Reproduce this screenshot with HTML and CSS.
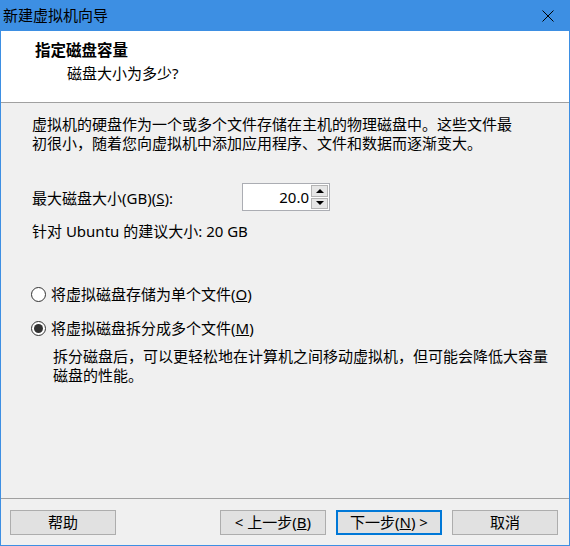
FILE: index.html
```html
<html>
	<head>
		<title>新建虚拟机向导</title>
		<link rel="stylesheet" href="styles.css">
	</head>
	<body>
		<div class="window">
			<div class="titlebar">
				<span class="title">新建虚拟机向导</span>
				<svg class="close" width="12" height="12" viewBox="0 0 12 12">
					<path d="M0.5 0.5 L11.5 11.5 M11.5 0.5 L0.5 11.5" stroke="#000" stroke-width="1" fill="none"/>
				</svg>
			</div>
			<div class="header">
				<div class="h-title">指定磁盘容量</div>
				<div class="h-sub">磁盘大小为多少?</div>
			</div>
			<div class="content">
				<p class="intro">虚拟机的硬盘作为一个或多个文件存储在主机的物理磁盘中。这些文件最初很小，随着您向虚拟机中添加应用程序、文件和数据而逐渐变大。</p>
				<div class="size-row">
					<span class="size-label">最大磁盘大小(GB)(<u>S</u>):</span>
					<div class="spin">
						<span class="spin-value">20.0</span>
						<div class="spin-btns">
							<div class="spin-btn"><span class="tri-up"></span></div>
							<div class="spin-btn"><span class="tri-down"></span></div>
						</div>
					</div>
				</div>
				<p class="hint">针对 Ubuntu 的建议大小: 20 GB</p>
				<div class="radio-row first">
					<span class="radio"></span>
					<span>将虚拟磁盘存储为单个文件(<u>O</u>)</span>
				</div>
				<div class="radio-row">
					<span class="radio checked"></span>
					<span>将虚拟磁盘拆分成多个文件(<u>M</u>)</span>
				</div>
				<p class="desc">拆分磁盘后，可以更轻松地在计算机之间移动虚拟机，但可能会降低大容量磁盘的性能。</p>
			</div>
			<div class="footer">
				<div class="btn">帮助</div>
				<div class="btn-group">
					<div class="btn">&lt; 上一步(<u>B</u>)</div>
					<div class="btn default">下一步(<u>N</u>) &gt;</div>
					<div class="btn">取消</div>
				</div>
			</div>
		</div>
	</body>
</html>
```
FILE: styles.css
```css
body {
	margin: 0;
	font-family: "Noto Sans", "Noto Sans CJK SC", sans-serif;
	font-size: 15px;
	color: #000;
}

.window {
	width: 570px;
	height: 546px;
	box-sizing: border-box;
	border: 1px solid #3d8fe3;
	border-top: none;
	display: flex;
	flex-direction: column;
	background: #f0f0f0;
}

.titlebar {
	height: 31px;
	margin: 0 -1px;
	background: #3d8fe3;
	display: flex;
	align-items: center;
	justify-content: space-between;
	padding: 0 16px 0 3px;
}

.title {
	line-height: 31px;
	color: #000;
}

.header {
	height: 72px;
	background: #fff;
	border-bottom: 1px solid #a0a0a0;
	padding: 8px 0 0 34px;
	box-sizing: border-box;
}

.h-title {
	font-weight: bold;
	font-size: 15.5px;
	line-height: 22px;
}

.h-sub {
	line-height: 22px;
	margin: 1px 0 0 32px;
}

.content {
	flex: 1;
	padding: 12px 0 0 31px;
}

p {
	margin: 0;
	line-height: 19px;
}

.intro {
	width: 490px;
}

.size-row {
	display: flex;
	align-items: center;
	margin-top: 30px;
	height: 28px;
}

.size-label {
	width: 210px;
}

.spin {
	display: flex;
	width: 88px;
	height: 28px;
	box-sizing: border-box;
	border: 1px solid #abadb3;
	background: #fff;
}

.spin-value {
	flex: 1;
	text-align: right;
	line-height: 26px;
	padding-right: 2px;
}

.spin-btns {
	display: flex;
	flex-direction: column;
	gap: 1px;
	padding: 1px 1px 1px 0;
	width: 17px;
}

.spin-btn {
	flex: 1;
	background: #e6e6e6;
	border: 1px solid #b4b4b4;
	display: flex;
	align-items: center;
	justify-content: center;
}

.tri-up {
	width: 0;
	height: 0;
	border-left: 4px solid transparent;
	border-right: 4px solid transparent;
	border-bottom: 4px solid #000;
}

.tri-down {
	width: 0;
	height: 0;
	border-left: 4px solid transparent;
	border-right: 4px solid transparent;
	border-top: 4px solid #000;
}

.hint {
	margin-top: 11px;
}

.radio-row {
	display: flex;
	align-items: center;
	line-height: 19px;
	margin-top: 15px;
}

.radio-row.first {
	margin-top: 44px;
}

.radio {
	width: 15px;
	height: 15px;
	box-sizing: border-box;
	border: 1px solid #333;
	border-radius: 50%;
	background: #fff;
	margin: 0 5px 0 -1px;
	display: flex;
	align-items: center;
	justify-content: center;
}

.radio.checked::after {
	content: "";
	width: 9px;
	height: 9px;
	border-radius: 50%;
	background: #333;
}

.desc {
	margin: 9px 0 0 21px;
	width: 500px;
}

.footer {
	height: 47px;
	border-top: 1px solid #a0a0a0;
	box-sizing: border-box;
	display: flex;
	padding: 11px 11px 0 9px;
}

.btn-group {
	margin-left: auto;
	display: flex;
	gap: 10px;
}

.btn {
	width: 106px;
	height: 25px;
	box-sizing: border-box;
	background: #e1e1e1;
	border: 1px solid #adadad;
	text-align: center;
	line-height: 23px;
}

.btn.default {
	border: 2px solid #0078d7;
	line-height: 21px;
}
```
